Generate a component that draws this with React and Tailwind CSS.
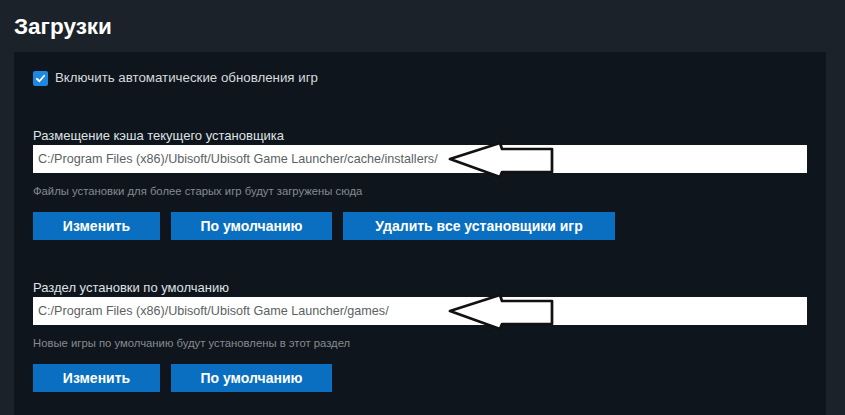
import React from "react";

function Arrow() {
  return (
    <svg
      className="absolute left-[412px] top-[-5px]"
      width="112"
      height="42"
      viewBox="0 0 112 42"
    >
      <polygon
        points="5,19 55,3 57,9 107,9 107,32 57,32 55,37"
        fill="#ffffff"
        stroke="#111111"
        strokeWidth="2.7"
        strokeLinejoin="round"
      />
    </svg>
  );
}

function PathInput({ value }) {
  return (
    <div className="relative mt-px h-[28px] bg-white flex items-center pl-[5px] text-[12.6px] text-[#5c5f63]">
      <span>{value}</span>
      <Arrow />
    </div>
  );
}

function Btn({ children, w }) {
  return (
    <button className={`h-[28px] ${w} bg-[#0a6fc0] text-white text-[14px] font-bold flex items-center justify-center`}>
      {children}
    </button>
  );
}

export default function App() {
  return (
    <div
      className="w-[845px] h-[415px] overflow-hidden bg-[#1b2229] flex flex-col"
      style={{ fontFamily: '"Liberation Sans", Arial, sans-serif' }}
    >
      <div className="pl-[14px] pt-[13px] text-[22.5px] leading-[28px] font-bold text-white">
        Загрузки
      </div>
      <div className="flex-1 mt-[11px] ml-[14px] mr-[19px] bg-[#0f151c] px-[19px] pt-[18px]">
        <div className="flex items-center h-[16px]">
          <div className="w-[15px] h-[15px] bg-[#1e88e0] rounded-[2px] flex items-center justify-center">
            <svg width="11" height="11" viewBox="0 0 12 12">
              <path d="M2 6.3 L4.8 9 L10 3" fill="none" stroke="#ffffff" strokeWidth="2" strokeLinecap="round" strokeLinejoin="round" />
            </svg>
          </div>
          <span className="ml-[7px] text-[13.3px] text-[#d6dadd]">
            Включить автоматические обновления игр
          </span>
        </div>

        <div className="mt-[42px] text-[13px] leading-[16px] text-[#dfe2e5]">
          Размещение кэша текущего установщика
        </div>
        <PathInput value="C:/Program Files (x86)/Ubisoft/Ubisoft Game Launcher/cache/installers/" />
        <div className="mt-[10px] text-[11.3px] leading-[16px] text-[#858b91]">
          Файлы установки для более старых игр будут загружены сюда
        </div>
        <div className="mt-[13px] flex gap-[11px]">
          <Btn w="w-[127px]">Изменить</Btn>
          <Btn w="w-[161px]">По умолчанию</Btn>
          <Btn w="w-[272px]">Удалить все установщики игр</Btn>
        </div>

        <div className="mt-[40px] text-[13px] leading-[16px] text-[#dfe2e5]">
          Раздел установки по умолчанию
        </div>
        <PathInput value="C:/Program Files (x86)/Ubisoft/Ubisoft Game Launcher/games/" />
        <div className="mt-[10px] text-[11.3px] leading-[16px] text-[#858b91]">
          Новые игры по умолчанию будут установлены в этот раздел
        </div>
        <div className="mt-[13px] flex gap-[11px]">
          <Btn w="w-[127px]">Изменить</Btn>
          <Btn w="w-[161px]">По умолчанию</Btn>
        </div>
      </div>
    </div>
  );
}
